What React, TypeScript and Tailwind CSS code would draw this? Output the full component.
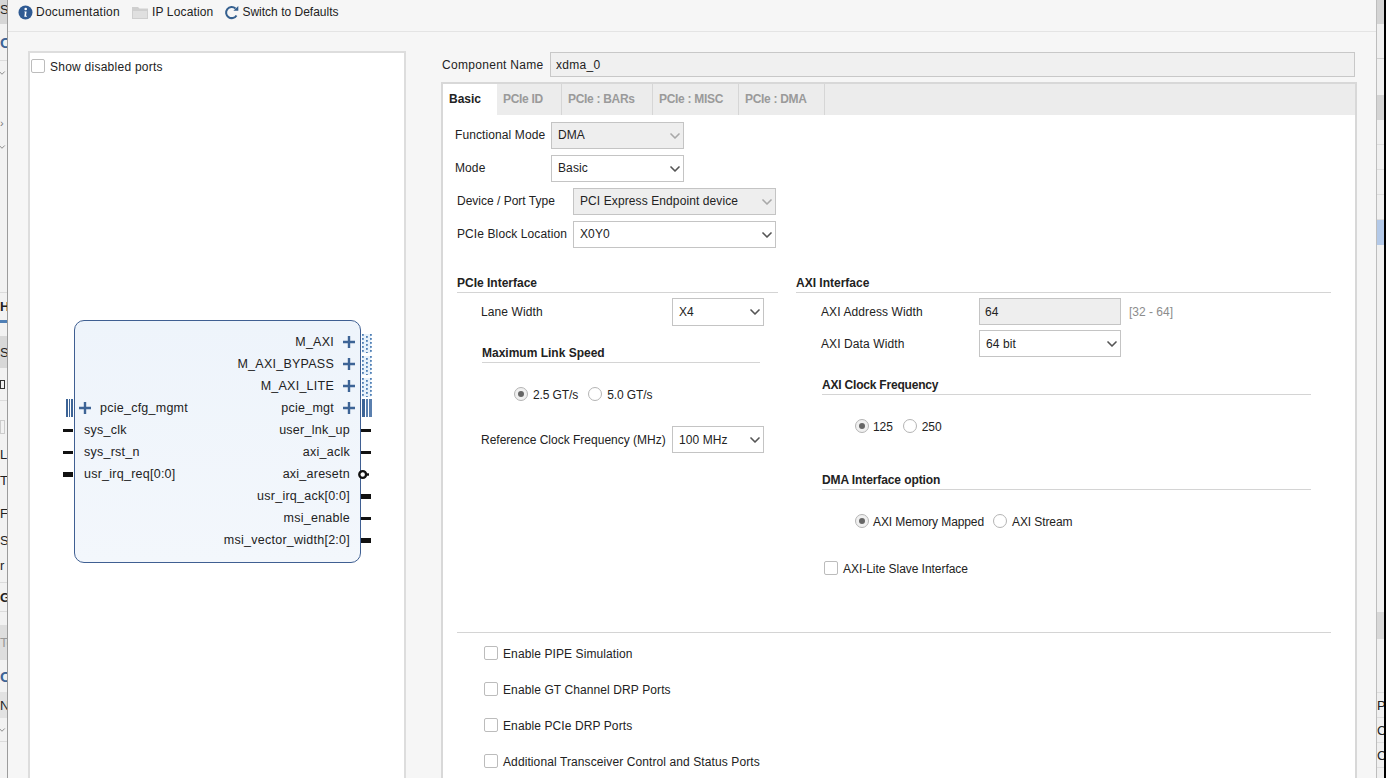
import { ChevronDown } from "lucide-react";

const ports = [
  { right: "M_AXI", rp: "dots", plus: true },
  { right: "M_AXI_BYPASS", rp: "dots", plus: true },
  { right: "M_AXI_LITE", rp: "dots", plus: true },
  { left: "pcie_cfg_mgmt", lp: "bars", right: "pcie_mgt", rp: "bars", plus: true },
  { left: "sys_clk", lp: "wire", right: "user_lnk_up", rp: "wire" },
  { left: "sys_rst_n", lp: "wire", right: "axi_aclk", rp: "wire" },
  { left: "usr_irq_req[0:0]", lp: "bus", right: "axi_aresetn", rp: "neg" },
  { right: "usr_irq_ack[0:0]", rp: "bus" },
  { right: "msi_enable", rp: "wire" },
  { right: "msi_vector_width[2:0]", rp: "bus" },
];

function Plus() {
  return (
    <svg width="12" height="12" viewBox="0 0 12 12" className="shrink-0">
      <path d="M6 0v12M0 6h12" stroke="#3d6496" strokeWidth="2.4" />
    </svg>
  );
}

function Stub({ kind, side }: { kind?: string; side: "l" | "r" }) {
  if (kind === "wire") return <div className="h-[3px] w-[10px] bg-[#111]" />;
  if (kind === "bus") return <div className="h-[5px] w-[10px] bg-[#111]" />;
  if (kind === "bars")
    return side === "l" ? (
      <div className="ml-[3px] flex h-[18px] gap-[1px]">
        <div className="w-[1.5px] bg-[#3d6496]" />
        <div className="w-[1.5px] bg-[#3d6496]" />
        <div className="w-[1.5px] bg-[#3d6496]" />
      </div>
    ) : (
      <div className="ml-[1px] flex h-[18px] gap-[1px]">
        <div className="w-[2.5px] bg-[#3d6496]" />
        <div className="w-[2.5px] bg-[#5a7fae]" />
        <div className="w-[2.5px] bg-[#5a7fae]" />
      </div>
    );
  if (kind === "dots")
    return (
      <svg width="11" height="22" viewBox="0 0 11 22">
        <rect x="1" y="3" width="9" height="19" fill="#e8f2fb" />
        {[1, 5, 9].map((x, i) =>
          [3, 7, 11, 15, 19].map((y) => (
            <rect key={`${x}-${y}`} x={x} y={i === 1 ? y + 2 : y} width="1.8" height="1.8" fill="#4f7fb5" />
          )),
        )}
      </svg>
    );
  if (kind === "neg")
    return (
      <svg width="11" height="11" viewBox="0 0 11 11" className="-ml-[3px]">
        <circle cx="4.7" cy="5.5" r="3.4" fill="#fff" stroke="#111" strokeWidth="2.4" />
        <path d="M8 5.5H11" stroke="#111" strokeWidth="2.4" />
      </svg>
    );
  return null;
}

function Block() {
  return (
    <div className="ml-[33px] mt-[247px] flex w-[309px] text-[12.5px] leading-none tracking-[0.25px] text-[#222]">
      <div className="w-[11px] pt-[11px]">
        {ports.map((p) => (
          <div key={p.right} className="flex h-[22px] items-center justify-start">
            <Stub kind={p.lp} side="l" />
          </div>
        ))}
      </div>
      <div className="h-[243px] w-[287px] rounded-[10px] border border-[#3f5f92] bg-gradient-to-b from-[#eef4fb] to-[#f3f7fc] pt-[10px]">
        {ports.map((p) => (
          <div key={p.right} className="flex h-[22px] items-center justify-between">
            <div className="flex items-center">
              {p.lp === "bars" && (
                <div className="ml-[4px] mr-[9px]">
                  <Plus />
                </div>
              )}
              {p.left && <span className={p.lp === "bars" ? "" : "ml-[9px]"}>{p.left}</span>}
            </div>
            <div className="flex items-center">
              <span className={p.plus ? "mr-[9px]" : "mr-[10px]"}>{p.right}</span>
              {p.plus && (
                <div className="mr-[5px]">
                  <Plus />
                </div>
              )}
            </div>
          </div>
        ))}
      </div>
      <div className="w-[11px] pt-[11px]">
        {ports.map((p) => (
          <div key={p.right} className="flex h-[22px] items-center">
            <Stub kind={p.rp} side="r" />
          </div>
        ))}
      </div>
    </div>
  );
}

function Select({ value, width, off, h = "h-[27px]" }: { value: string; width: string; off?: boolean; h?: string }) {
  return (
    <div
      className={`flex ${h} ${width} shrink-0 items-center justify-between border border-[#c4c4c4] pl-[6px] ${
        off ? "bg-[#eeeeee]" : "bg-white"
      }`}
    >
      <span>{value}</span>
      <ChevronDown size={16} strokeWidth={2.5} className={off ? "text-[#a8a8a8]" : "text-[#555]"} />
    </div>
  );
}

function Heading({ text, className }: { text: string; className: string }) {
  return (
    <div className={`flex h-[19px] items-center border-b border-[#d4d4d4] pb-[1px] font-bold text-[#222] ${className}`}>
      {text}
    </div>
  );
}

function Radio({ label, on, className = "gap-[4px]" }: { label: string; on?: boolean; className?: string }) {
  return (
    <div className={`flex items-center ${className}`}>
      <div className={`flex size-[14px] items-center justify-center rounded-full border border-[#b4b4b4] ${on ? "bg-[#f0f0f0]" : "bg-white"}`}>
        {on && <div className="size-[6px] rounded-full bg-[#666]" />}
      </div>
      <span className="pt-[1px] tracking-[-0.1px]">{label}</span>
    </div>
  );
}

function Check({ label, className = "" }: { label: string; className?: string }) {
  return (
    <div className={`flex h-[14px] items-center gap-[5px] ${className}`}>
      <div className="size-[14px] rounded-[2px] border border-[#bcbcbc] bg-white" />
      <span className="pt-[1px]">{label}</span>
    </div>
  );
}

function Tab({ label, width }: { label: string; width: string }) {
  return <div className={`flex h-full items-center border-r border-[#d6d6d6] pb-[2px] pl-[6px] font-bold tracking-[-0.3px] text-[#9a9a9a] ${width}`}>{label}</div>;
}

function LeftStrip() {
  const cell = "overflow-hidden text-[13px] leading-none text-[#222] whitespace-nowrap flex items-center";
  return (
    <div className="flex h-full w-2 shrink-0 flex-col overflow-hidden border-r border-[#9c9c9c] bg-[#f2f2f2]">
      <div className={`${cell} h-[24px] bg-[#d6d6d6] pb-[6px]`}>Sc</div>
      <div className="flex h-[37px] items-center border-b border-[#dcdcdc] text-[15px] font-bold text-[#3d6496]">O</div>
      <div className="flex h-[24px] items-center">
        <ChevronDown size={10} className="-ml-[3px] text-[#777]" />
      </div>
      <div className="h-[26px]" />
      <div className="flex h-[24px] items-center text-[11px] text-[#777]">›</div>
      <div className="flex h-[24px] items-center">
        <ChevronDown size={10} className="-ml-[3px] text-[#777]" />
      </div>
      <div className="h-[133px]" />
      <div className={`${cell} h-[28px] border-t border-[#dcdcdc] font-bold`}>H</div>
      <div className="h-[3px] bg-[#4f7fb5]" />
      <div className="h-[13px]" />
      <div className={`${cell} h-[32px] bg-[#d8d8d8]`}>Sc</div>
      <div className={`${cell} h-[32px]`}>
        <div className="h-[9px] w-[5px] border border-[#333]" />
      </div>
      <div className="h-[20px] border-t border-[#dcdcdc]" />
      <div className="h-[14px] w-[5px] border border-[#ccc]" />
      <div className="h-[10px]" />
      <div className={`${cell} h-[20px]`}>L</div>
      <div className={`${cell} h-[32px]`}>T</div>
      <div className={`${cell} h-[34px]`}>F</div>
      <div className={`${cell} h-[20px]`}>S</div>
      <div className={`${cell} h-[30px]`}>r</div>
      <div className="h-[2px]" />
      <div className={`${cell} h-[30px] border-y border-[#dcdcdc] font-bold`}>G</div>
      <div className="h-[13px]" />
      <div className={`${cell} h-[35px] bg-[#dedede] text-[#999]`}>To</div>
      <div className="flex h-[32px] items-center text-[15px] font-bold text-[#3d6496]">O</div>
      <div className={`${cell} h-[26px] bg-[#e2e2e2]`}>N</div>
      <div className="flex h-[24px] items-center border-b border-[#dcdcdc]">
        <ChevronDown size={10} className="-ml-[3px] text-[#777]" />
      </div>
    </div>
  );
}

function RightStrip() {
  const cell = "overflow-hidden whitespace-nowrap text-[13px] leading-none text-[#222] border-b border-[#dddddd]";
  return (
    <div className="flex h-full w-[8px] shrink-0 flex-col overflow-hidden border-l border-[#bdbdbd] bg-[#f0f0f0]">
      <div className="h-[24px] bg-[#d4d4d4]" />
      <div className="h-[35px] border-b border-[#d0d0d0]" />
      <div className="h-[36px]" />
      <div className="h-[25px] bg-[#d4d4d4]" />
      <div className="h-[25px] border-b border-[#dddddd]" />
      <div className="h-[25px] border-b border-[#dddddd]" />
      <div className="h-[25px] border-b border-[#dddddd]" />
      <div className="h-[25px] border-b border-[#dddddd]" />
      <div className="h-[25px] bg-[#b3c9e8]" />
      <div className="h-[367px]" />
      <div className="h-[27px] bg-[#d8d8d8]" />
      <div className="h-[54px] border-b border-[#dddddd]" />
      <div className={`${cell} flex h-[25px] items-center`}>Pa</div>
      <div className={`${cell} flex h-[25px] items-center`}>C</div>
      <div className={`${cell} flex h-[25px] items-center`}>C</div>
    </div>
  );
}

export default function App() {
  return (
    <div className="flex h-[778px] w-[1386px] overflow-hidden bg-black font-['Liberation_Sans',sans-serif] text-[12px] leading-none tracking-[0.1px] text-[#222]">
      <LeftStrip />

      <div className="flex h-full w-[1368px] shrink-0 flex-col bg-[#f6f6f6]">
        {/* Toolbar */}
        <div className="flex h-[32px] shrink-0 items-center border-b border-[#e4e4e4] pb-[7px] pl-[10px]">
          <div className="flex items-center gap-[3px] tracking-[0.25px]">
            <svg width="15" height="15" viewBox="0 0 15 15">
              <circle cx="7.5" cy="7.5" r="7" fill="#2f5a93" />
              <circle cx="7.7" cy="4" r="1.3" fill="#fff" />
              <path d="M6.4 6.4h2.2l-.6 4.4h.9v1H6.3l.6-4.5h-.6z" fill="#fff" />
            </svg>
            <span>Documentation</span>
          </div>
          <div className="ml-[12px] flex items-center gap-[4px] tracking-[0.15px]">
            <svg width="16" height="14" viewBox="0 0 16 14">
              <path d="M0 2h6l1.5 1.5H16V14H0z" fill="#cfcfcf" />
              <path d="M1 6h14v7H1z" fill="#e0e0e0" />
            </svg>
            <span>IP Location</span>
          </div>
          <div className="ml-[11px] flex items-center gap-[3px] tracking-normal">
            <svg width="15" height="15" viewBox="0 0 15 15" fill="none">
              <path d="M12.5 10.4A5.6 5.6 0 1 1 11.5 3.4" stroke="#35608f" strokeWidth="2" />
              <path d="M9.4 5.8h4.9V1z" fill="#35608f" />
            </svg>
            <span>Switch to Defaults</span>
          </div>
        </div>

        {/* Body */}
        <div className="flex min-h-0 flex-1 pl-[20px] pt-[19px]">
          <div className="h-[760px] w-[378px] shrink-0 border-2 border-b-0 border-[#dddddd] bg-white">
            <Check label="Show disabled ports" className="ml-[1px] mt-[6px] tracking-[0.25px]" />
            <Block />
          </div>

          <div className="ml-[36px] w-[915px] shrink-0">
            <div className="flex h-[26px] items-center pt-[1px] tracking-[0.3px]">
              <span className="w-[108px]">Component Name</span>
              <div className="flex h-[25px] w-[805px] items-center border border-[#c8c8c8] bg-[#f0f0f0] pl-[5px]">xdma_0</div>
            </div>

            <div className="ml-[-1px] mt-[5px] h-[700px] w-[916px] border-2 border-b-0 border-[#d8d8d8] bg-white">
              <div className="flex h-[31px] items-center bg-[#ececec]">
                <div className="flex h-full w-[54px] items-center bg-white pb-[2px] pl-[6px] font-bold tracking-normal text-[#222]">Basic</div>
                <Tab label="PCIe ID" width="w-[65px]" />
                <Tab label="PCIe : BARs" width="w-[91px]" />
                <Tab label="PCIe : MISC" width="w-[86px]" />
                <Tab label="PCIe : DMA" width="w-[86px]" />
              </div>

              <div className="pl-[12px] pt-[7px] [&_span]:-translate-y-px">
                <div className="flex h-[27px] items-center">
                  <span className="w-[96px]">Functional Mode</span>
                  <Select value="DMA" width="w-[133px]" off />
                </div>
                <div className="mt-[6px] flex h-[27px] items-center">
                  <span className="w-[96px]">Mode</span>
                  <Select value="Basic" width="w-[133px]" />
                </div>
                <div className="ml-[2px] mt-[6px] flex h-[27px] items-center">
                  <span className="w-[116px] tracking-normal">Device / Port Type</span>
                  <Select value="PCI Express Endpoint device" width="w-[203px]" off />
                </div>
                <div className="ml-[2px] mt-[6px] flex h-[27px] items-center">
                  <span className="w-[116px]">PCIe Block Location</span>
                  <Select value="X0Y0" width="w-[203px]" />
                </div>
              </div>

              <div className="ml-[14px] mt-[26px] flex gap-[18px]">
                {/* PCIe column */}
                <div className="w-[321px]">
                  <Heading text="PCIe Interface" className="tracking-normal" />
                  <div className="ml-[24px] mt-[5px] flex h-[28px] items-center">
                    <span className="w-[191px]">Lane Width</span>
                    <Select value="X4" width="w-[92px]" h="h-[28px]" />
                  </div>
                  <Heading text="Maximum Link Speed" className="ml-[25px] mr-[18px] mt-[18px] tracking-normal" />
                  <div className="ml-[57px] mt-[24px] flex">
                    <Radio label="2.5 GT/s" on className="gap-[5px]" />
                    <Radio label="5.0 GT/s" className="ml-[10px] gap-[5px]" />
                  </div>
                  <div className="ml-[24px] mt-[25px] flex h-[27px] items-center">
                    <span className="w-[191px] whitespace-nowrap tracking-normal">Reference Clock Frequency (MHz)</span>
                    <Select value="100 MHz" width="w-[92px]" />
                  </div>
                </div>

                {/* AXI column */}
                <div className="w-[535px]">
                  <Heading text="AXI Interface" className="tracking-normal" />
                  <div className="ml-[25px] mt-[5px] flex h-[27px] items-center">
                    <span className="w-[158px]">AXI Address Width</span>
                    <div className="flex h-[27px] w-[142px] items-center border border-[#c4c4c4] bg-[#eeeeee] pl-[5px]">64</div>
                    <span className="ml-[8px] tracking-normal text-[#8c8c8c]">[32 - 64]</span>
                  </div>
                  <div className="ml-[25px] mt-[5px] flex h-[27px] items-center">
                    <span className="w-[158px]">AXI Data Width</span>
                    <Select value="64 bit" width="w-[142px]" />
                  </div>
                  <Heading text="AXI Clock Frequency" className="ml-[26px] mr-[20px] mt-[19px] tracking-[-0.2px]" />
                  <div className="ml-[59px] mt-[24px] flex">
                    <Radio label="125" on />
                    <Radio label="250" className="ml-[10px] gap-[5px]" />
                  </div>
                  <Heading text="DMA Interface option" className="ml-[26px] mr-[20px] mt-[38px] tracking-[-0.1px]" />
                  <div className="ml-[59px] mt-[24px] flex">
                    <Radio label="AXI Memory Mapped" on />
                    <Radio label="AXI Stream" className="ml-[9px] gap-[5px]" />
                  </div>
                  <Check label="AXI-Lite Slave Interface" className="ml-[28px] mt-[33px] tracking-[-0.05px]" />
                </div>
              </div>

              <div className="ml-[14px] mt-[57px] h-px w-[874px] bg-[#d4d4d4]" />

              <div className="ml-[41px] mt-[13px] flex flex-col gap-[22px]">
                <Check label="Enable PIPE Simulation" />
                <Check label="Enable GT Channel DRP Ports" />
                <Check label="Enable PCIe DRP Ports" />
                <Check label="Additional Transceiver Control and Status Ports" />
              </div>
            </div>
          </div>
        </div>
      </div>

      <RightStrip />
    </div>
  );
}
